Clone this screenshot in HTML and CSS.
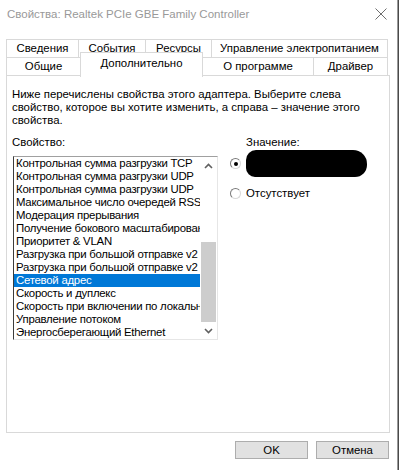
FILE: index.html
```html
<!DOCTYPE html>
<html lang="ru">
<head>
<meta charset="utf-8">
<title>Свойства</title>
<link rel="stylesheet" href="styles.css">
</head>
<body>
<div class="screen">
  <div class="window">
    <div class="titlebar">
      <span class="title">Свойства: Realtek PCIe GBE Family Controller</span>
      <svg class="close" width="12" height="12" viewBox="0 0 12 12"><path d="M0.5 0.5 L11.5 11.5 M11.5 0.5 L0.5 11.5" stroke="#6e6e6e" stroke-width="1" fill="none"/></svg>
    </div>
    <div class="tabs">
      <div class="tabrow row1">
        <div class="tab t1">Сведения</div>
        <div class="tab t2">События</div>
        <div class="tab t3">Ресурсы</div>
        <div class="tab t4">Управление электропитанием</div>
      </div>
      <div class="tabrow row2">
        <div class="tab t5">Общие</div>
        <div class="tab t6 selected">Дополнительно</div>
        <div class="tab t7">О программе</div>
        <div class="tab t8">Драйвер</div>
      </div>
    </div>
    <div class="panel">
      <p class="desc">Ниже перечислены свойства этого адаптера. Выберите слева<br>свойство, которое вы хотите изменить, а справа – значение этого<br>свойства.</p>
      <div class="cols">
        <div class="left">
          <div class="label">Свойство:</div>
          <div class="listbox">
            <ul class="items">
              <li>Контрольная сумма разгрузки TCP</li>
              <li>Контрольная сумма разгрузки UDP</li>
              <li>Контрольная сумма разгрузки UDP</li>
              <li>Максимальное число очередей RSS</li>
              <li>Модерация прерывания</li>
              <li>Получение бокового масштабирования</li>
              <li>Приоритет &amp; VLAN</li>
              <li>Разгрузка при большой отправке v2</li>
              <li>Разгрузка при большой отправке v2</li>
              <li class="sel">Сетевой адрес</li>
              <li>Скорость и дуплекс</li>
              <li>Скорость при включении по локальной сети</li>
              <li>Управление потоком</li>
              <li>Энергосберегающий Ethernet</li>
            </ul>
            <div class="scrollbar">
              <div class="sb-btn"><svg width="9" height="6" viewBox="0 0 9 6"><path d="M1 5 L4.5 1.5 L8 5" stroke="#606060" stroke-width="1.6" fill="none"/></svg></div>
              <div class="sb-track"><div class="sb-thumb"></div></div>
              <div class="sb-btn"><svg width="9" height="6" viewBox="0 0 9 6"><path d="M1 1 L4.5 4.5 L8 1" stroke="#606060" stroke-width="1.6" fill="none"/></svg></div>
            </div>
          </div>
        </div>
        <div class="right">
          <div class="label vlabel">Значение:</div>
          <div class="opt opt1"><span class="radio checked"></span><div class="redacted"></div></div>
          <div class="opt opt2"><span class="radio"></span><span class="opt-text">Отсутствует</span></div>
        </div>
      </div>
    </div>
    <div class="buttons">
      <button class="btn">OK</button>
      <button class="btn">Отмена</button>
    </div>
  </div>
  <div class="edge"></div>
</div>
</body>
</html>
```
FILE: styles.css
```css
* { box-sizing: border-box; }
html, body { margin: 0; padding: 0; background: #fff; }
body {
  font-family: "Liberation Sans", Arial, sans-serif;
  font-size: 11.4px;
  color: #000;
  width: 400px;
  height: 470px;
  overflow: hidden;
}
.screen { display: flex; width: 400px; height: 470px; }
.window { width: 397px; height: 470px; background: #fff; }
.edge {
  width: 3px;
  height: 470px;
  border-left: 1px solid #9a9a9a;
  border-right: 1px solid #fff;
  background: #4a4a4a;
}
.titlebar {
  height: 28px;
  display: flex;
  justify-content: space-between;
  align-items: flex-start;
  padding: 0 10px 0 7px;
}
.title { line-height: 28px; color: #999; font-size: 11.5px; }
.close { margin-top: 8px; }

.tabs { margin-top: 11px; padding-left: 6px; }
.tabrow { display: flex; height: 19px; }
.row2 { margin-top: -1px; }
.tab {
  height: 19px;
  border: 1px solid #d9d9d9;
  margin-left: -1px;
  text-align: center;
  line-height: 17px;
  white-space: nowrap;
  background: #fff;
}
.tabrow .tab:first-child { margin-left: 0; }
.t1 { width: 73px; }
.t2 { width: 68px; }
.t3 { width: 67px; }
.t4 { width: 177px; }
.t5 { width: 75px; }
.t6 { width: 123px; }
.t7 { width: 112px; }
.t8 { width: 75px; }
.tab.selected {
  position: relative;
  z-index: 1;
  height: 25px;
  margin-top: -5px;
  padding-top: 2px;
  border-bottom: none;
}

.panel {
  margin: -1px 0 0 6px;
  width: 384px;
  height: 358px;
  border: 1px solid #d9d9d9;
  padding: 12px 0 0 5px;
}
.desc { margin: 0; line-height: 13px; white-space: nowrap; }
.cols { display: flex; margin-top: 9px; }
.label { line-height: 13px; height: 13px; }
.left { width: 206px; }
.listbox {
  margin: 7px 0 0 1px;
  width: 205px;
  height: 184px;
  border-top: 1px solid #a0a0a0;
  border-left: 1px solid #3c3c3c;
  border-right: 1px solid #e6e6e6;
  border-bottom: 1px solid #e6e6e6;
  display: flex;
  overflow: hidden;
}
.items {
  list-style: none;
  margin: 0;
  padding: 0;
  width: 186px;
  overflow: hidden;
  letter-spacing: -0.25px;
}
.items li {
  height: 13px;
  line-height: 13px;
  padding-left: 2px;
  white-space: nowrap;
  overflow: hidden;
}
.items li.sel { background: #0078d7; color: #fff; }
.scrollbar {
  width: 17px;
  display: flex;
  flex-direction: column;
  background: #fff;
}
.sb-btn {
  height: 17px;
  display: flex;
  align-items: center;
  justify-content: center;
}
.sb-track { flex: 1; padding: 68px 1px 0 1px; }
.sb-thumb { height: 80px; background: #cdcdcd; }

.right { margin-left: 12px; }
.vlabel { margin-left: 16px; }
.opt { display: flex; align-items: center; }
.opt1 { height: 27px; margin-top: 1px; }
.opt2 { margin-top: 10px; height: 13px; line-height: 13px; }
.radio {
  width: 11px;
  height: 11px;
  border-radius: 50%;
  border: 1px solid;
  border-color: #7a7a7a #d8d8d8 #d8d8d8 #7a7a7a;
  background: #fff;
  margin-right: 5px;
  display: flex;
  align-items: center;
  justify-content: center;
  flex: none;
}
.radio.checked::after {
  content: "";
  width: 4px;
  height: 4px;
  border-radius: 50%;
  background: #000;
}
.redacted {
  width: 121px;
  height: 27px;
  background: #000;
  border-radius: 10px 14px 12px 9px;
}

.buttons {
  display: flex;
  justify-content: flex-end;
  gap: 8px;
  margin-top: 8px;
  padding-right: 8px;
}
.btn {
  width: 73px;
  height: 18px;
  background: #e1e1e1;
  border: 1px solid #adadad;
  font-family: "Liberation Sans", Arial, sans-serif;
  font-size: 11.4px;
  color: #000;
  padding: 0;
  line-height: 16px;
}
```
